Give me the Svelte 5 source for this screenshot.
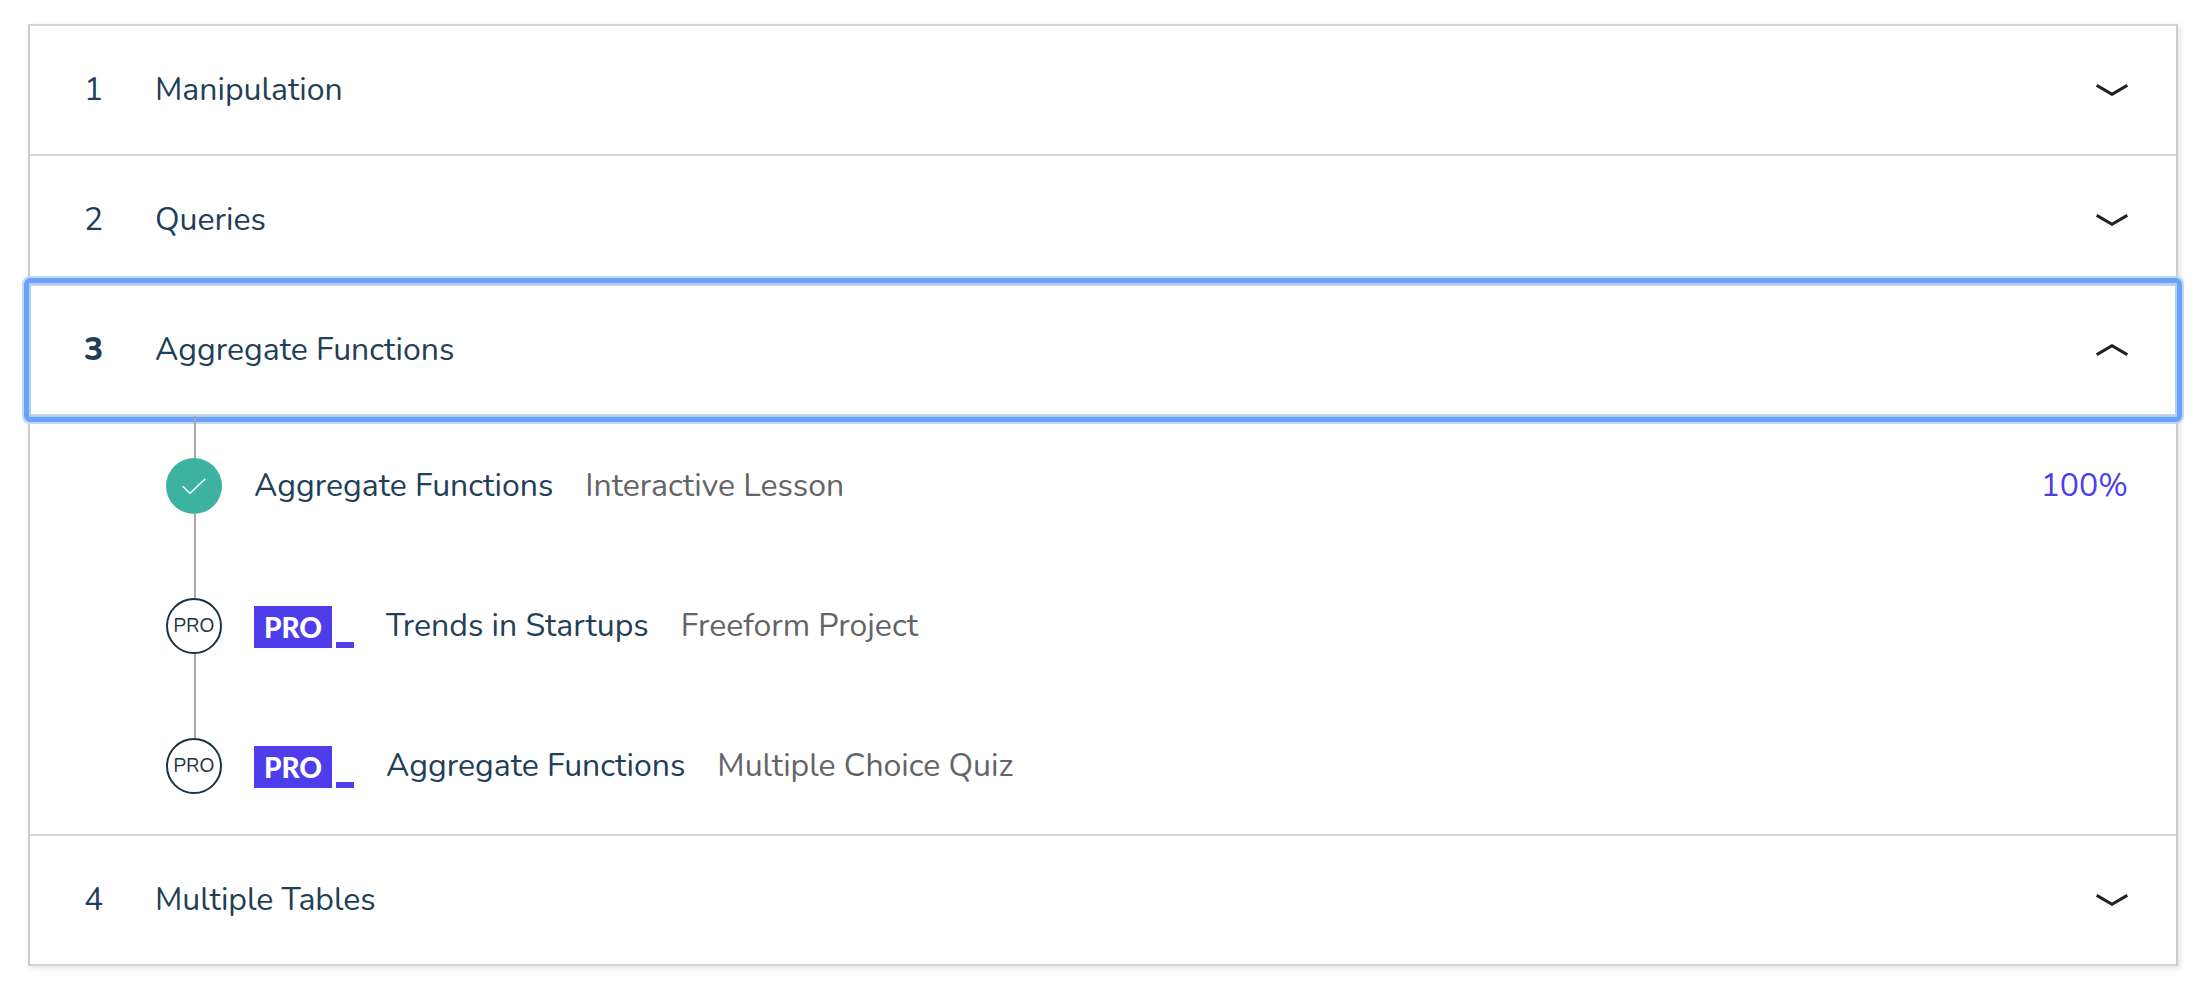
<script>
  const lessons = [
    { title: 'Aggregate Functions', kind: 'Interactive Lesson', done: true, progress: '100%' },
    { title: 'Trends in Startups', kind: 'Freeform Project', pro: true },
    { title: 'Aggregate Functions', kind: 'Multiple Choice Quiz', pro: true }
  ];

  let modules = $state([
    { title: 'Manipulation', open: false, lessons: [] },
    { title: 'Queries', open: false, lessons: [] },
    { title: 'Aggregate Functions', open: true, lessons },
    { title: 'Multiple Tables', open: false, lessons: [] }
  ]);

  let active = $state(2);

  function toggle(i) {
    modules[i].open = !modules[i].open;
    active = i;
  }
</script>

<main class="syllabus">
  {#each modules as mod, i}
    <section class="module">
      <h2 class="heading">
        <button
          type="button"
          class="header"
          class:active={active === i}
          aria-expanded={mod.open}
          onclick={() => toggle(i)}
        >
          <span class="number" class:strong={mod.open}>{i + 1}</span>
          <span class="title">{mod.title}</span>
          <svg class="chevron" class:flipped={mod.open} viewBox="0 0 32 12" aria-hidden="true">
            <path d="M.7 1.4 16 10.3 31.3 1.4" />
          </svg>
        </button>
      </h2>
      {#if mod.open && mod.lessons.length}
        <ol class="lessons">
          {#each mod.lessons as lesson}
            <li class="lesson">
              <div class="track">
                {#if lesson.done}
                  <span class="marker done">
                    <svg class="check" viewBox="0 0 24 16" aria-hidden="true">
                      <path d="M.6 8.2 8 15.3 23.4.7" />
                    </svg>
                  </span>
                {:else}
                  <span class="marker">PRO</span>
                {/if}
              </div>
              <a class="link" href="#lesson">
                {#if lesson.pro}
                  <span class="flag"><span class="flag-box">PRO</span><span class="cursor"></span></span>
                {/if}
                <span class="name">{lesson.title}</span>
                <span class="kind">{lesson.kind}</span>
              </a>
              {#if lesson.progress}
                <span class="progress">{lesson.progress}</span>
              {/if}
            </li>
          {/each}
        </ol>
      {/if}
    </section>
  {/each}
</main>

<style>
  :global(body) {
    margin: 0;
    background: #fff;
  }

  .syllabus {
    margin: 24px 26px 28px 28px;
    border: 2px solid #ccc;
    border-top-color: #d4d4d4;
    border-bottom-color: #d4d4d4;
    background: #fff;
    box-shadow: 2px 2px 6px rgba(0, 0, 0, 0.12);
    color: #1f4058;
    font-family: Nunito, 'Open Sans', sans-serif;
    font-size: 32px;
    line-height: 44px;
  }

  .module + .module {
    border-top: 2px solid #d4d4d4;
  }

  .heading {
    margin: 0;
    font: inherit;
  }

  .header {
    position: relative;
    display: flex;
    align-items: center;
    box-sizing: border-box;
    width: 100%;
    padding: 42px 48px 42px 54px;
    border: 0;
    background: none;
    color: inherit;
    font: inherit;
    text-align: left;
    cursor: pointer;
    outline: none;
  }

  .header.active::after {
    content: '';
    position: absolute;
    inset: -8px -6px;
    border: 5px solid #6aa2f8;
    border-radius: 6px;
    box-shadow: 0 0 0 2px #c0d8fa, inset 0 0 0 2px #b4cdf2;
    pointer-events: none;
  }

  .number {
    width: 71px;
  }

  .strong {
    font-weight: 800;
  }

  .title {
    flex: 1;
  }

  .chevron {
    width: 32px;
    height: 12px;
    fill: none;
    stroke: #222;
    stroke-width: 3;
  }

  .flipped {
    transform: scaleY(-1);
  }

  .lessons {
    margin: 0;
    padding: 0 48px 0 136px;
    border-top: 2px solid #d4d4d4;
    list-style: none;
  }

  .lesson {
    display: flex;
    align-items: center;
    height: 140px;
  }

  .lesson:last-child {
    margin-bottom: -2px;
  }

  .track {
    position: relative;
    display: flex;
    flex-direction: column;
    align-self: stretch;
    margin-right: 32px;
  }

  .track::before,
  .track::after {
    content: '';
    flex: 1;
    width: 2px;
    margin-left: 28px;
    background: #a9a9ad;
  }

  .lesson:last-child .track::after {
    background: none;
  }

  .marker {
    display: flex;
    align-items: center;
    justify-content: center;
    box-sizing: border-box;
    width: 56px;
    height: 56px;
    border: 2px solid #1b3445;
    border-radius: 50%;
    color: #1b3445;
    font-size: 20px;
    line-height: 28px;
  }

  .done {
    border: 0;
    background: #3db2a0;
  }

  .check {
    width: 24px;
    height: 16px;
    fill: none;
    stroke: #fff;
    stroke-width: 1.4;
  }

  .link {
    display: flex;
    flex: 1;
    align-items: center;
    gap: 32px;
    color: inherit;
    text-decoration: none;
  }

  .flag {
    display: flex;
    align-items: flex-end;
    gap: 4px;
    padding-top: 2px;
  }

  .flag-box {
    width: 78px;
    background: #4d3eea;
    color: #fff;
    font-family: Lato, sans-serif;
    font-size: 28px;
    font-weight: 900;
    line-height: 42px;
    text-align: center;
  }

  .cursor {
    width: 18px;
    height: 6px;
    background: #4d3eea;
  }

  .kind {
    color: #646466;
  }

  .progress {
    color: #4d3eea;
  }
</style>
